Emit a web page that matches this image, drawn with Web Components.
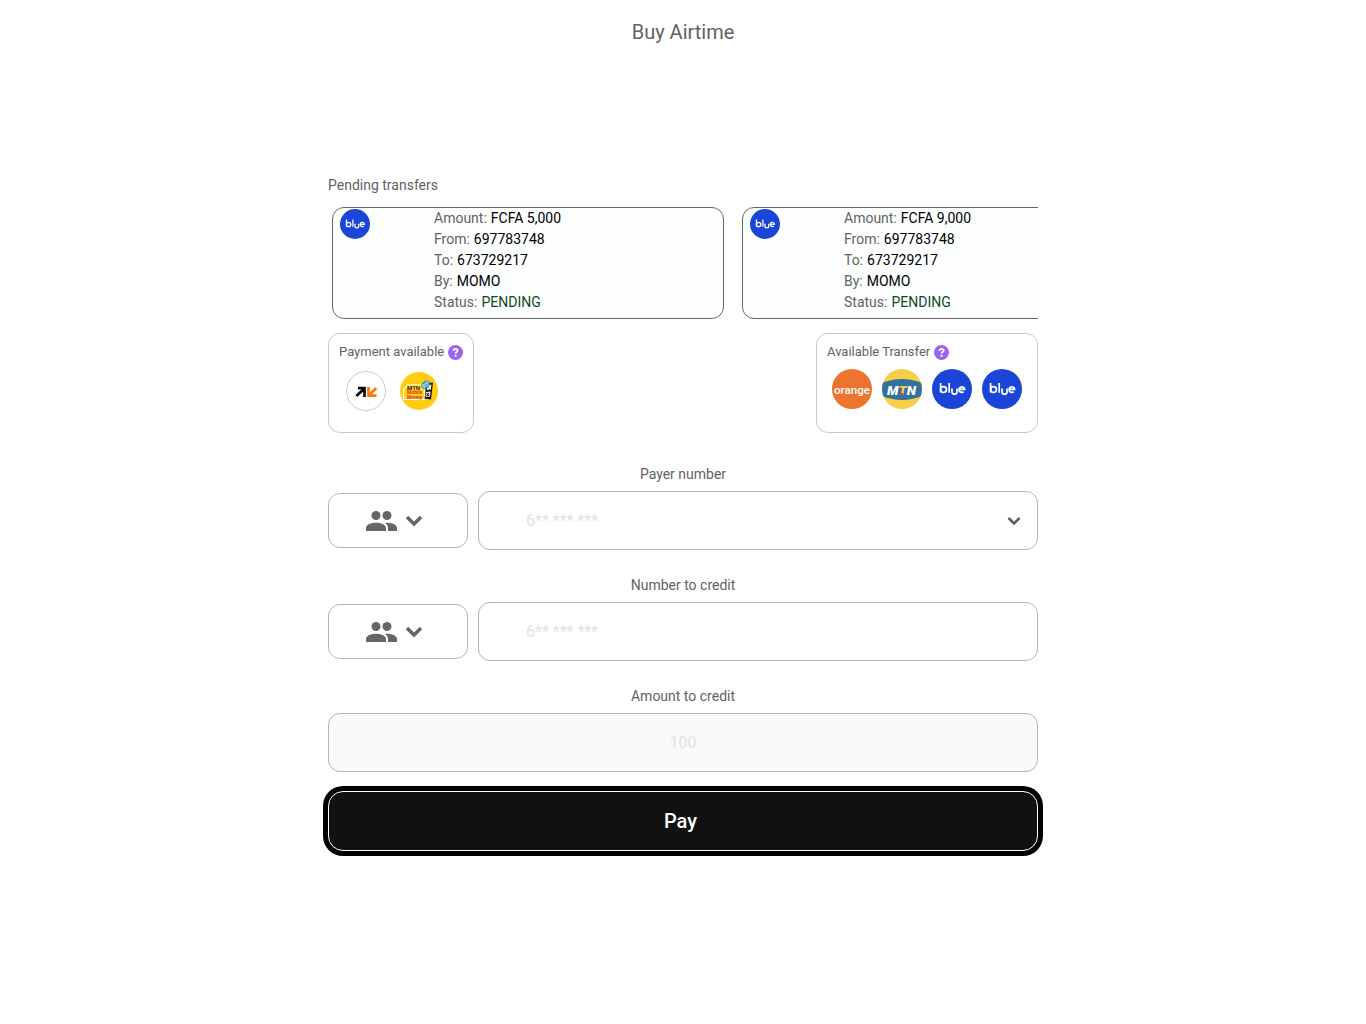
<!DOCTYPE html>
<html lang="en">
<head>
<meta charset="utf-8">
<meta name="viewport" content="width=device-width, initial-scale=1">
<title>Buy Airtime</title>
<style>
  body { margin: 0; background: #fff; color: #626262; font: 400 14px/21px Roboto, "Liberation Sans", sans-serif; --line: #b4b4b4; }
</style>
</head>
<body>
<airtime-page></airtime-page>
<script>
const make = (name, css, html) => customElements.define(name, class extends HTMLElement {
  constructor() {
    super();
    this.attachShadow({ mode: "open" }).innerHTML =
      `<style>*{box-sizing:border-box}:host{display:block;box-sizing:border-box}${css}</style>` +
      (typeof html === "function" ? html(this) : html);
  }
});

const logos = {
  blue: `<circle cx="20" cy="20" r="20" fill="#1b45d8"/>
    <g fill="none" stroke="#fff" stroke-width="1.700">
      <path d="M8.600 14v9.500"/><circle cx="11.500" cy="20.600" r="2.900"/>
      <path d="M17.200 14v9.800"/><path d="M20 19.500v3.200a2.500 2.500 0 0 0 5 0v-3.200"/>
      <path d="M27.200 20.400h5.400a2.800 2.800 0 1 0-.9 2.300"/>
    </g>`,
  money: `<circle cx="20" cy="20" r="19.500" fill="#fff" stroke="#c8c8c8"/>
    <g fill="none" stroke-width="2.700">
      <path d="M12 17.200h6.500v8.800M10.300 25l7.700-7" stroke="#080808"/>
      <path d="M22.500 16v8.700h8M23 24.200l7.200-7.200" stroke="#ff7900"/>
    </g>`,
  momo: `<circle cx="20" cy="20" r="19" fill="#fc1"/>
    <path d="M4.500 28.500V18l4-4h17v14.500z" fill="#ffd21c" stroke="#fff" stroke-width="1.200"/>
    <path d="M27.500 12.500l6.500-1-2 17-6.500-1z" fill="#171717"/>
    <path d="M28.500 14l4-.6-.7 5-4 .6zM27 21l4.500-.6-.5 5-4.500.5z" fill="#eee"/>
    <path d="M27.500 22l2.500 3M30 22l-2.500 3" stroke="#222" stroke-width="1.100"/>
    <path d="M22.500 13.500l4-4 4 1.500-1 5-4 2-2.500-2z" fill="#8bd6e5" stroke="#176c8a" stroke-width=".7"/>
    <path d="M24 13l3-2M25.500 15l3-2M26 17l2.500-1.500" stroke="#246b91" stroke-width=".8"/>
    <text x="8" y="19" font-size="6" font-weight="600" fill="#222">MTN</text>
    <text x="8" y="23.300" font-size="5" font-weight="600" fill="#df271b">Mobile</text>
    <text x="8" y="27.600" font-size="5" font-weight="600" fill="#df271b">Money</text>`,
  orange: `<circle cx="20" cy="20" r="20" fill="#ed742f"/>
    <text x="20" y="25" text-anchor="middle" font-size="11.600" font-weight="500" fill="#fff">orange</text>`,
  mtn: `<clipPath id="disc"><circle cx="20" cy="20" r="20"/></clipPath>
    <g clip-path="url(#disc)"><path fill="#f7cf46" d="M0 0h40v40H0z"/>
    <path d="M0 14Q20 6 40 14v13Q20 35 0 27z" fill="#31719b"/></g>
    <text x="19.500" y="25.500" text-anchor="middle" font-size="13.500" font-weight="900" font-style="italic" fill="#fff">M<tspan fill="#f7cf46">T</tspan>N</text>
    <path d="M18.800 24h2.600l-.6 2.200h-2.500z" fill="#e63b32"/>`
};
make("brand-logo", `:host{width:var(--logo,40px);height:var(--logo,40px);flex:none}svg{display:block;width:100%;height:100%;font-family:Roboto,sans-serif}`,
  el => `<svg viewBox="0 0 40 40" aria-hidden="true">${logos[el.getAttribute("name")]}</svg>`);

make("transfer-card",
  `:host{flex:0 0 392px;display:flex;border:1px solid #666;border-radius:12px;background:#fcfffe;padding:0 7px 5px}
   brand-logo{--logo:30px;margin-top:1px}
   dl{margin:0 0 0 64px}div{display:flex;gap:4px}dd{margin:0;color:#000}.status{color:#0d4a22}`,
  el => `<brand-logo name="blue"></brand-logo><dl>
    <div><dt>Amount:</dt><dd>${el.getAttribute("amount")}</dd></div>
    <div><dt>From:</dt><dd>697783748</dd></div>
    <div><dt>To:</dt><dd>673729217</dd></div>
    <div><dt>By:</dt><dd>MOMO</dd></div>
    <div><dt>Status:</dt><dd class="status">PENDING</dd></div></dl>`);

make("provider-box",
  `:host{border:1px solid #c8c8c8;border-radius:12px;height:100px;padding:8px 10px}
   header{display:flex;align-items:center;gap:4px;font-size:13px;line-height:20px;white-space:nowrap}
   button{border:0;padding:0;width:15px;height:15px;background:none;flex:none}svg{display:block}
   .logos{display:flex;padding:var(--logo-pad,7px 5px);gap:var(--logo-gap,10px)}`,
  el => `<header>${el.getAttribute("heading")}<button aria-label="Help"><svg width="15" height="15" viewBox="0 0 15 15"><circle cx="7.500" cy="7.500" r="7.500" fill="#9b63ee"/><path d="M5.500 5.800q.2-2 2.100-2 2 0 2 1.700 0 1-1 1.600-1 .6-1 1.500" fill="none" stroke="#fff" stroke-width="1.800"/><path d="M6.600 9.900h2v1.800h-2z" fill="#fff"/></svg></button></header>
  <div class="logos"><slot></slot></div>`);

make("contact-picker", `:host{flex:0 0 140px}button{width:100%;height:55px;border:1px solid var(--line);border-radius:12px;background:#fff;display:flex;align-items:center;justify-content:center;gap:7px;padding:0 8px 0 0}`,
  `<button aria-label="Choose a contact"><svg width="33" height="20" viewBox="0 0 33 20" fill="#666"><circle cx="11" cy="4.500" r="4.500"/><circle cx="22" cy="4.500" r="4.500"/><path d="M1 20v-3c0-3.700 5.500-5.300 10-5.300s10 1.600 10 5.300v3zM21.500 11.800c5 0 10.500 1.700 10.500 5.200v3h-9v-3c0-2.200-1-3.900-3-5.100z"/></svg>
   <svg width="18" height="12" viewBox="0 0 18 12"><path d="M2 2l7 7 7-7" fill="none" stroke="#666" stroke-width="3.500"/></svg></button>`);

make("form-field",
  `label{display:block;text-align:center;margin-bottom:6px}
   .row{display:flex;align-items:center;gap:10px}
   .box{flex:1;min-width:0;height:59px;display:flex;align-items:center;border:1px solid var(--line);border-radius:12px;overflow:hidden}
   input{flex:1;min-width:0;height:100%;border:0;outline:0;background:none;padding:0 47px;font:400 16px/24px Roboto,sans-serif;color:#666}
   input::placeholder{color:#e2e2e2;opacity:1}
   .box button{border:0;background:none;padding:0;width:46px;height:100%;display:grid;place-items:center}
   :host([kind=amount]) .box{background:#fafafa}
   :host([kind=amount]) input{text-align:center}`,
  el => {
    const amount = el.getAttribute("kind") === "amount";
    return `<label for="value">${el.getAttribute("label")}</label><div class="row">
    ${amount ? "" : "<contact-picker></contact-picker>"}
    <div class="box"><input id="value" inputmode="numeric" placeholder="${amount ? "100" : "6** *** ***"}">
    ${el.hasAttribute("history") ? `<button aria-label="Recent numbers"><svg width="14" height="10" viewBox="0 0 14 10"><path d="M1.500 2L7 7.500 12.500 2" fill="none" stroke="#5c5c5c" stroke-width="2.500"/></svg></button>` : ""}</div></div>`;
  });

make("pay-button", `button{width:100%;height:60px;border:1px solid #fff;border-radius:15px;background:#111;box-shadow:0 0 0 5px #000;color:#fff;font:500 20px/24px Roboto,sans-serif;padding:0 5px 0 0}`,
  `<button type="submit"><slot></slot></button>`);

make("airtime-page",
  `h1{font-size:20px;line-height:24px;font-weight:400;text-align:center;margin:0;padding:20px 0}
   main{max-width:710px;margin:111px auto 0;padding-bottom:40px}
   h2{font:inherit;margin:0 0 11px}
   .cards{display:flex;gap:18px;padding-left:4px;overflow:hidden}
   .providers{display:flex;justify-content:space-between;margin:14px 0 31px}
   .pay{--logo-gap:13px;--logo-pad:9px 7px;width:146px}
   .send{width:222px}
   form{display:flex;flex-direction:column;gap:25px}
   pay-button{margin-top:-6px}`,
  `<h1>Buy Airtime</h1><main>
   <section><h2>Pending transfers</h2><div class="cards"><transfer-card amount="FCFA 5,000"></transfer-card><transfer-card amount="FCFA 9,000"></transfer-card></div></section>
   <section class="providers"><provider-box class="pay" heading="Payment available"><brand-logo name="money"></brand-logo><brand-logo name="momo"></brand-logo></provider-box>
   <provider-box class="send" heading="Available Transfer"><brand-logo name="orange"></brand-logo><brand-logo name="mtn"></brand-logo><brand-logo name="blue"></brand-logo><brand-logo name="blue"></brand-logo></provider-box></section>
   <form><form-field label="Payer number" history></form-field><form-field label="Number to credit"></form-field><form-field kind="amount" label="Amount to credit"></form-field><pay-button>Pay</pay-button></form></main>`);
</script>
</body>
</html>
